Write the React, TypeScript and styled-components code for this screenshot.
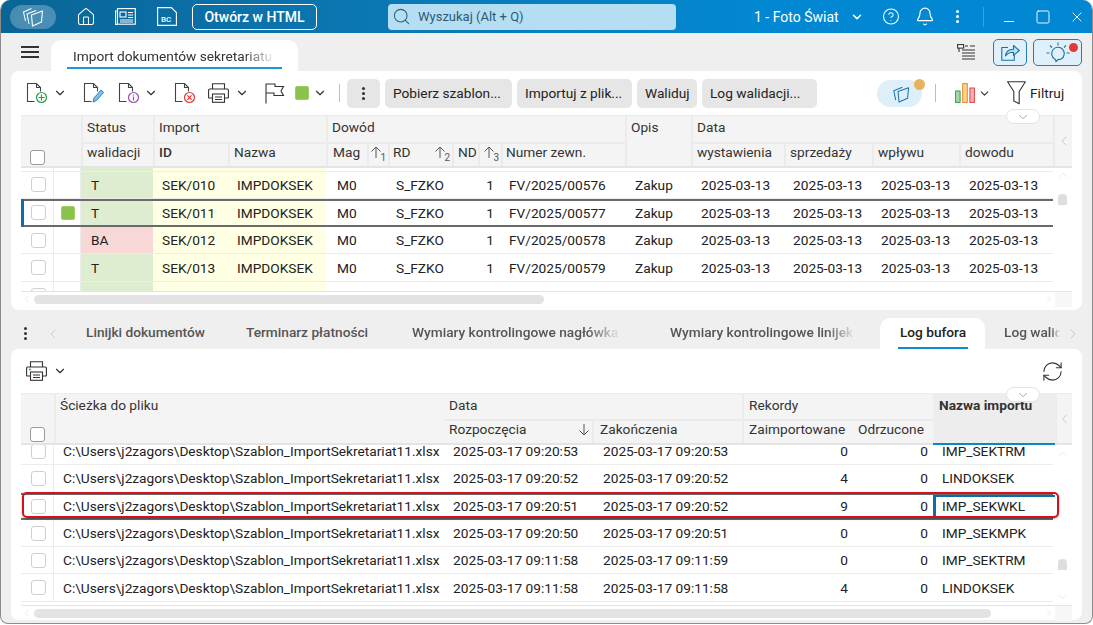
import React from "react";
import styled, { createGlobalStyle } from "styled-components";
import { Home, HelpCircle, Bell, Minus, Square, X, ChevronDown, ChevronLeft, ChevronRight, ChevronUp, RefreshCw, Search } from "lucide-react";

const Global = createGlobalStyle`
  html, body { margin: 0; padding: 0; background: #fff; }
  body { font-family: Roboto, "Liberation Sans", sans-serif; font-size: 13.7px; color: #222; overflow: hidden; }
  * { box-sizing: border-box; }
`;

const Win = styled.div`
  position: relative; width: 1093px; height: 624px; background: #efefef;
  border: 1px solid #8c8c8c; border-top: 0; border-radius: 10px 10px 8px 8px; overflow: hidden;
  display: flex; flex-direction: column;
`;
const TitleBar = styled.header`
  height: 33px; flex: none; display: flex; align-items: center; color: #fff;
  background: linear-gradient(90deg, #0a6597 0%, #0b78b4 35%, #0288d2 70%, #0288d2 100%);
`;
const LogoPill = styled.div`
  width: 46px; height: 24px; margin-left: 9px; border-radius: 12px; background: rgba(255,255,255,.26);
  display: flex; align-items: center; justify-content: center;
`;
const TitleIcon = styled.div<{ $w: number; $ml: number }>`
  width: ${p => p.$w}px; margin-left: ${p => p.$ml}px; flex: none; display: flex; align-items: center; justify-content: center;
`;
const HtmlBtn = styled.button`
  margin-left: 15px; width: 125px; height: 26px; border: 1px solid #fff; border-radius: 5px; background: transparent;
  color: #fff; font: 500 14px Roboto, sans-serif; padding: 0;
`;
const SearchBox = styled.div`
  margin-left: 71px; width: 288px; height: 26px; border-radius: 4px; background: #b5def3; color: #2c5a75;
  display: flex; align-items: center; gap: 7px; padding-left: 4px; font-size: 13px;
`;
const Company = styled.div` margin-left: 78px; width: 84px; font-size: 14px; white-space: nowrap; `;
const TitleSep = styled.div` width: 1px; height: 20px; background: rgba(255,255,255,.22); margin-left: 23px; `;

const TabRow = styled.div`
  height: 38px; flex: none; display: flex; align-items: flex-end; position: relative;
`;
const Burger = styled.div`
  width: 18px; height: 12px; margin: 0 0 13px 20px; border-top: 2px solid #333; border-bottom: 2px solid #333; position: relative;
  &::after { content: ""; position: absolute; left: 0; right: 0; top: 3px; height: 2px; background: #333; }
`;
const MainTab = styled.div`
  margin-left: 12px; width: 247px; height: 31px; background: #fff; border-radius: 10px 10px 0 0;
  padding: 0 16px; display: flex; flex-direction: column; align-items: stretch;
`;
const FadeText = styled.span`
  display: block; overflow: hidden; white-space: nowrap; font-weight: 500; color: #444;
  -webkit-mask-image: linear-gradient(90deg, #000 84%, transparent 100%);
  mask-image: linear-gradient(90deg, #000 84%, transparent 100%);
`;
const MainTabLabel = styled(FadeText)` margin: 7px 6px 0; height: 20px; line-height: 18px; color: #333; font-weight: 400; `;
const MainTabLine = styled.div` height: 2px; background: #1c9ad6; `;
const TabActions = styled.div` margin-left: auto; display: flex; align-items: center; gap: 6px; padding: 0 10px 5px 0; `;
const BlueBtn = styled.div<{ $w: number }>`
  position: relative; width: ${p => p.$w}px; height: 27px; border: 1px solid #1d7fb5; border-radius: 5px; background: #dff0fa;
  display: flex; align-items: center; justify-content: center; color: #1571a6;
`;
const RedDot = styled.span`
  position: absolute; right: 3px; top: 3px; width: 9px; height: 9px; border-radius: 50%; background: #e53935;
`;

const Panel = styled.section<{ $h: number }>`
  position: relative; margin: 0 10px; height: ${p => p.$h}px; flex: none; background: #fff; border-radius: 8px;
  display: flex; flex-direction: column; padding: 0 10px;
`;
const Toolbar = styled.div<{ $h: number }>`
  height: ${p => p.$h}px; flex: none; display: flex; align-items: center;
`;
const ToolIcon = styled.div<{ $ml: number }>`
  margin-left: ${p => p.$ml}px; display: flex; align-items: center; justify-content: center; flex: none; color: #333;
`;
const RefreshSlot = styled.div` margin-left: auto; margin-right: 8px; display: flex; color: #333; `;
const ListSlot = styled.div` margin-right: 11px; display: flex; `;
const Divider = styled.div<{ $ml: number }>`
  width: 1px; height: 18px; background: #bdbdbd; margin-left: ${p => p.$ml}px; flex: none;
`;
const GrayBtn = styled.button<{ $w: number; $ml?: number }>`
  width: ${p => p.$w}px; margin-left: ${p => p.$ml ?? 5}px; height: 29px; border: 0; border-radius: 5px; background: #e6e6e6;
  color: #222; font: 13.7px Roboto, sans-serif; padding: 0 0 0 8px; text-align: left; flex: none; white-space: nowrap; overflow: hidden;
`;
const Kebab = styled.div<{ $color?: string }>`
  display: flex; flex-direction: column; gap: 2px; align-items: center; justify-content: center;
  & i { width: 3px; height: 3px; border-radius: 50%; background: ${p => p.$color ?? "#333"}; display: block; }
`;
const KebabBtn = styled(GrayBtn)` padding: 0; display: flex; align-items: center; justify-content: center; `;
const SwatchBox = styled.span`
  width: 14px; height: 14px; border-radius: 2px; background: #8bc34a; border: 1px solid #9cce62; display: block; flex: none;
`;
const SyncPill = styled.div`
  position: relative; margin-left: 60px; width: 45px; height: 27px; border-radius: 14px; background: #deeff9;
  display: flex; align-items: center; justify-content: center; flex: none;
`;
const OrangeDot = styled.span`
  position: absolute; right: -3px; top: -1px; width: 11px; height: 11px; border-radius: 50%; background: #e6b45f;
`;
const FilterLabel = styled.span` margin-left: 4px; flex: none; `;

const Collapse = styled.div<{ $top: number }>`
  position: absolute; left: 995px; top: ${p => p.$top}px; width: 34px; height: 15px; border-radius: 8px; background: #fff;
  border: 1px solid #e2e2e2; display: flex; align-items: center; justify-content: center; color: #999; z-index: 3;
`;

const GridHead = styled.div<{ $cols: string; $rows: string }>`
  display: grid; grid-template-columns: ${p => p.$cols}; grid-template-rows: ${p => p.$rows};
  background: #f4f4f4; flex: none; border-bottom: 2px solid #e4e4e4; border-top: 1px solid #ececec;
`;
const HCell = styled.div<{ $col: string; $row: string; $active?: boolean; $noLine?: boolean; $sub?: boolean; $strong?: boolean; $pl?: number }>`
  grid-column: ${p => p.$col}; grid-row: ${p => p.$row}; padding: ${p => (p.$sub ? "0" : "3px")} 0 0 ${p => p.$pl ?? (p.$noLine ? 5 : 4)}px; line-height: 16px; white-space: nowrap; overflow: hidden;
  color: #333; position: relative; font-weight: ${p => (p.$strong ? 500 : 400)};
  border-left: ${p => (p.$noLine ? "0" : "2px solid #ebebeb")};
  border-top: ${p => (p.$sub ? "2px solid #ebebeb" : "0")};
  ${p => p.$active && "background:#ededed; font-weight:700; border-bottom:2px solid #0b86c8; margin-bottom:-2px; border-left:0; padding-left:6px;"}
`;
const HCheck = styled.div`
  grid-column: 1; grid-row: 1 / span 2; display: flex; align-items: flex-end; padding: 0 0 1px 9px; 
`;
const Check = styled.span<{ $strong?: boolean }>`
  display: block; width: 15px; height: 15px; border-radius: 3px; background: #fff; flex: none;
  border: 1px solid ${p => (p.$strong ? "#9a9a9a" : "#cfcfcf")};
`;
const SortMark = styled.span<{ $top?: number }>`
  position: absolute; right: 2px; top: ${p => p.$top ?? 1}px; display: flex; align-items: flex-end; color: #555;
  & em { font-style: normal; font-size: 10px; line-height: 10px; margin: 0 0 -4px -2px; }
`;
const SideCol = styled.div`
  grid-column: -2; grid-row: 1 / span 2; display: flex; align-items: center; justify-content: center; color: #bbb; border-left: 2px solid #ebebeb;
`;

const BodyWrap = styled.div<{ $h: number }>`
  height: ${p => p.$h}px; flex: none; display: grid; grid-template-columns: 1fr 19px; overflow: hidden; position: relative;
`;
const RowList = styled.div<{ $offset: number }>`
  margin-top: ${p => p.$offset}px; min-width: 0;
`;
const Row = styled.div<{ $cols: string; $h: number; $sel?: boolean }>`
  display: grid; grid-template-columns: ${p => p.$cols}; height: ${p => p.$h}px; position: relative;
  border-bottom: 1px solid #ececec; align-items: stretch;
  ${p => p.$sel && "border-top: 2px solid #6a6a6a; border-bottom: 2px solid #6a6a6a;"}
`;
const SelBar = styled.span`
  position: absolute; left: 0; top: -2px; bottom: -2px; width: 3px; background: #0b6ea8;
`;
const Cell = styled.div<{ $bg?: string; $pl?: number; $right?: number; $focus?: boolean; $span?: number }>`
  display: flex; align-items: center; white-space: nowrap; overflow: hidden; color: #222;
  background: ${p => p.$bg ?? "transparent"};
  padding-left: ${p => p.$pl ?? 0}px;
  ${p => p.$span && `grid-column: span ${p.$span};`}
  ${p => p.$right !== undefined && `justify-content:flex-end; padding-right:${p.$right}px;`}
  ${p => p.$focus && "box-shadow: inset 3px 0 0 #0b6ea8, inset 0 2px 0 #0b6ea8, inset 0 -2px 0 #0b6ea8;"}
`;
const CheckCell = styled(Cell)` padding-left: 10px; border-right: 1px solid #ececec; `;
const IndCell = styled(Cell)` padding-left: 7px; border-right: 1px solid #ececec; `;

const VScroll = styled.div`
  display: flex; flex-direction: column; align-items: center; color: #ddd; position: relative;
`;
const VThumb = styled.div<{ $mt: number }>`
  width: 9px; height: 11px; border-radius: 4px 4px 0 0; background: #dedede; margin-top: ${p => p.$mt}px; flex: none;
`;
const VArrowUp = styled.div<{ $mt: number }>` margin-top: ${p => p.$mt}px; line-height: 0; flex: none; `;
const VArrowDown = styled.div` margin-top: auto; margin-bottom: 1px; line-height: 0; flex: none; `;
const HScroll = styled.div`
  height: 15px; flex: none; display: flex; align-items: center; color: #ddd; border-top: 1px solid #e4e4e4; position: relative;
`;
const HThumb = styled.div<{ $w: number }>`
  width: ${p => p.$w}px; height: 9px; margin-left: 1px; border-radius: 5px; background: #e3e3e3;
`;
const HArrowRight = styled.div` margin-left: auto; margin-right: 17px; line-height: 0; `;
const HCorner = styled.div`
  position: absolute; right: 0; top: 0; width: 17px; height: 15px; background: #f7f7f7;
`;

const SubTabs = styled.div`
  height: 31px; margin-top: 8px; flex: none; display: flex; align-items: flex-end; position: relative; font-weight: 500; color: #555;
`;
const SubTabText = styled.div<{ $w: number; $ml: number }>`
  width: ${p => p.$w}px; margin-left: ${p => p.$ml}px; height: 31px; line-height: 29px; white-space: nowrap; overflow: hidden; flex: none;
`;
const SubTabFade = styled(FadeText)<{ $w: number; $ml: number }>`
  width: ${p => p.$w}px; margin-left: ${p => p.$ml}px; height: 31px; line-height: 29px; flex: none; color: #555;
`;
const ActiveSubTab = styled.div`
  width: 105px; height: 31px; margin-left: 24px; background: #fff; border-radius: 10px 10px 0 0; padding: 0 17px 0 18px; flex: none;
  display: flex; flex-direction: column; color: #222; text-align: center; line-height: 29px; white-space: nowrap;
`;
const ActiveLabel = styled.div` height: 29px; `;
const ActiveLine = styled.div` height: 2px; background: #0b8bd0; `;
const SubKebab = styled.div` margin: 0 0 9px 22px; width: 5px; flex: none; `;
const TabChevron = styled.div<{ $ml: number }>` margin: 0 0 7px ${p => p.$ml}px; line-height: 0; color: #bbb; flex: none; `;
const Annotation = styled.div`
  position: absolute; left: 21px; top: 492px; width: 1037px; height: 26px; border: 2px solid #d3101c; border-radius: 5px;
  box-shadow: 0 1px 2px rgba(0,0,0,.35); pointer-events: none; z-index: 4;
`;

/* ---------- drawings ---------- */
const Copies = ({ c = "#fff", s = 22, back = true }: { c?: string; s?: number; back?: boolean }) => (
  <svg width={s} height={s} viewBox="0 0 22 22" fill="none" stroke={c} strokeWidth="1.1" strokeLinejoin="round">
    {back && <path d="M3.500 15 1.500 6 9.500 2.500" />}
    <path d="M7 18 5 8 14 4.500" />
    <path d="M9.500 9 20.500 5l-1 11-9 4z" />
  </svg>
);
const News = () => (
  <svg width="21" height="17" viewBox="0 0 21 17" fill="none" stroke="#fff" strokeWidth="1.1">
    <rect x="2.500" y=".6" width="17.800" height="15.600" /><path d="M2.500 3H.6v13.400h2" /><rect x="5" y="4" width="6" height="5" />
    <path d="M13 4.500h5M13 7h5M13 9.500h5M5 12h13M5 14h13" />
  </svg>
);
const Doc = ({ children }: { children?: React.ReactNode }) => (
  <svg width="22" height="23" viewBox="0 0 22 23" fill="none">
    <path d="M8.500 19.500H1.500V1.500h9l4 4v4" stroke="#444" strokeWidth="1.1" />
    <path d="M10.500 1.500v4h4" stroke="#444" strokeWidth="1.1" />
    {children}
  </svg>
);
const DocAdd = () => (
  <Doc><circle cx="15.500" cy="15.500" r="5" fill="#fff" stroke="#22a04a" strokeWidth="1.2" /><path d="M15.500 12.500v6M12.500 15.500h6" stroke="#22a04a" strokeWidth="1.2" /></Doc>
);
const DocEdit = () => (
  <Doc><path d="M10 20l1-4 7-8 2.600 2.400-7 8z" fill="#7cc0ea" stroke="#2a85c4" strokeWidth="1" /></Doc>
);
const DocInfo = () => (
  <Doc><circle cx="15.500" cy="15.500" r="5" fill="#fff" stroke="#9c4fb0" strokeWidth="1.2" /><path d="M15.500 14.600v4M15.500 12.400v1" stroke="#9c4fb0" strokeWidth="1.2" /></Doc>
);
const DocDel = () => (
  <Doc><circle cx="15.500" cy="15.500" r="5" fill="#fff" stroke="#e53935" strokeWidth="1.2" /><path d="M13.400 13.400l4.200 4.200M17.600 13.400l-4.200 4.200" stroke="#e53935" strokeWidth="1.2" /></Doc>
);
const Printer = ({ mark = false }: { mark?: boolean }) => (
  <svg width="21" height="20" viewBox="0 0 21 20" fill="none" stroke="#333" strokeWidth="1.1">
    <path d="M4.500 6V.7h12V6" /><path d="M4.500 15H1.200a.6.6 0 0 1-.6-.6V7a1 1 0 0 1 1-1h17.800a1 1 0 0 1 1 1v7.400a.6.6 0 0 1-.6.6h-3.300" />
    <rect x="4.500" y="11" width="12" height="8.300" /><path d="M7 14h7M7 16.500h7" />
    {mark && <path d="M3 8.500h2" stroke="#2a9ad6" strokeWidth="1.4" />}
  </svg>
);
const Flag = () => (
  <svg width="20" height="21" viewBox="0 0 20 21" fill="none" stroke="#333" strokeWidth="1.1">
    <path d="M1 20.500V1h9v2.500h8.500L16 8l2.500 4.500H9V10H1" />
  </svg>
);
const Bars = () => (
  <svg width="20" height="20" viewBox="0 0 20 20">
    <rect x=".6" y="8" width="4.500" height="11.400" fill="#a8d8a8" stroke="#2f9e50" />
    <rect x="7.700" y=".6" width="4.600" height="18.800" fill="#fbd38b" stroke="#e8862e" />
    <rect x="14.900" y="5" width="4.500" height="14.400" fill="#f6b3b3" stroke="#e04444" />
  </svg>
);
const FunnelIcon = () => (
  <svg width="19" height="24" viewBox="0 0 19 24" fill="none" stroke="#333" strokeWidth="1.1" strokeLinejoin="round">
    <path d="M.6.8h17.800l-6.200 9.700v12.200l-5.400-2.800v-9.400z" />
  </svg>
);
const ShareIcon = () => (
  <svg width="19" height="17" viewBox="0 0 19 17" fill="none" stroke="#1571a6" strokeWidth="1.1" strokeLinejoin="round">
    <path d="M7 3.500H.8v12.800h12.500v-5" />
    <path d="M4.500 12c.4-4.200 3.500-6.800 8-6.800V1.500l5.800 5-5.800 5V8.300c-3.500 0-6 1-8 3.700z" fill="#bfe0f4" />
  </svg>
);
const ListIcon = () => (
  <svg width="19" height="18" viewBox="0 0 19 18" fill="none" stroke="#333" strokeWidth="1.1">
    <rect x=".6" y=".6" width="6" height="3.500" fill="#fff" /><path d="M8 2h3M13 2h5M5 6h13M5 9h13M5 12h13M5 15h13" />
    <path d="M2 4v4" />
  </svg>
);
const Bulb = () => (
  <svg width="24" height="22" viewBox="0 0 24 22" fill="none" stroke="#1571a6" strokeWidth="1.1">
    <path d="M12 17.500c-.4 1-1 1.500-2 2 0-1-.3-1.500-1-2.300A6.300 6.300 0 1 1 15.200 17c-1 .4-2 .5-3.200.5Z" />
    <path d="M12 .5v3M4 3.500l2 2M20 3.500l-2 2M.5 11h3M20.500 11h3" />
  </svg>
);
const BcDoc = () => (
  <svg width="20" height="19" viewBox="0 0 20 19" fill="none" stroke="#fff" strokeWidth="1.1">
    <path d="M.6.6h13.800l5 5v12.800H.6z" />
    <text x="4" y="15" fill="#fff" stroke="none" fontSize="8" fontFamily="Roboto" fontWeight="500">BC</text>
  </svg>
);
const Chev = ({ ml = 0, s = 14 }: { ml?: number; s?: number }) => (
  <ToolIcon $ml={ml}><ChevronDown size={s} strokeWidth={2} /></ToolIcon>
);
const Dots = ({ color }: { color?: string }) => <Kebab $color={color}><i /><i /><i /></Kebab>;

/* ---------- data ---------- */
const topCols = "33px 27px 72px 75px 98px 41px 21px 43px 21px 26px 23px 124px 66px 93px 88px 87px 94px";
const botCols = "33px 390px 148px 150px 110px 81px 122px";
const GREEN = "#deedcf", YELLOW = "#feffe3", RED = "#f8d7d7";

const topRows: { st: string; bg: string; id: string; no: string; sel?: boolean }[] = [
  { st: "", bg: GREEN, id: "", no: "" },
  { st: "T", bg: GREEN, id: "SEK/010", no: "00576" },
  { st: "T", bg: GREEN, id: "SEK/011", no: "00577", sel: true },
  { st: "BA", bg: RED, id: "SEK/012", no: "00578" },
  { st: "T", bg: GREEN, id: "SEK/013", no: "00579" },
  { st: "", bg: GREEN, id: "", no: "" },
];
const P = "C:\\Users\\j2zagors\\Desktop\\Szablon_ImportSekretariat11.xlsx";
const botRows = [
  { a: "2025-03-17 09:20:53", b: "2025-03-17 09:20:53", z: 0, o: 0, n: "IMP_SEKTRM" },
  { a: "2025-03-17 09:20:52", b: "2025-03-17 09:20:52", z: 4, o: 0, n: "LINDOKSEK" },
  { a: "2025-03-17 09:20:51", b: "2025-03-17 09:20:52", z: 9, o: 0, n: "IMP_SEKWKL", sel: true },
  { a: "2025-03-17 09:20:50", b: "2025-03-17 09:20:51", z: 0, o: 0, n: "IMP_SEKMPK" },
  { a: "2025-03-17 09:11:58", b: "2025-03-17 09:11:59", z: 0, o: 0, n: "IMP_SEKTRM" },
  { a: "2025-03-17 09:11:58", b: "2025-03-17 09:11:58", z: 4, o: 0, n: "LINDOKSEK" },
];
const D = "2025-03-13";

const Sort = ({ n }: { n: number }) => (
  <SortMark>
    <svg width="12" height="14" viewBox="0 0 12 14" fill="none" stroke="#555" strokeWidth="1"><path d="M6 13V2M1.500 6.500 6 2l4.500 4.500" /></svg>
    <em>{n}</em>
  </SortMark>
);

export default function App() {
  return (
    <Win>
      <Global />
      <TitleBar>
        <LogoPill><Copies /></LogoPill>
        <TitleIcon $w={20} $ml={20}><Home size={20} strokeWidth={1.3} /></TitleIcon>
        <TitleIcon $w={21} $ml={19}><News /></TitleIcon>
        <TitleIcon $w={20} $ml={21}><BcDoc /></TitleIcon>
        <HtmlBtn>Otwórz w HTML</HtmlBtn>
        <SearchBox><Search size={19} strokeWidth={1.3} color="#22607f" />Wyszukaj (Alt + Q)</SearchBox>
        <Company>1 - Foto Świat</Company>
        <TitleIcon $w={14} $ml={12}><ChevronDown size={14} strokeWidth={2.6} /></TitleIcon>
        <TitleIcon $w={18} $ml={18}><HelpCircle size={19} strokeWidth={1.4} /></TitleIcon>
        <TitleIcon $w={20} $ml={15}><Bell size={21} strokeWidth={1.4} /></TitleIcon>
        <TitleIcon $w={5} $ml={20}><Dots color="#fff" /></TitleIcon>
        <TitleSep />
        <TitleIcon $w={16} $ml={17}><Minus size={17} strokeWidth={1.4} style={{ transform: "translateY(5px)" }} /></TitleIcon>
        <TitleIcon $w={16} $ml={18}><Square size={16} strokeWidth={1.4} /></TitleIcon>
        <TitleIcon $w={16} $ml={18}><X size={18} strokeWidth={1.4} /></TitleIcon>
      </TitleBar>

      <TabRow>
        <Burger />
        <MainTab>
          <MainTabLabel>Import dokumentów sekretariatu</MainTabLabel>
          <MainTabLine />
        </MainTab>
        <TabActions>
          <ListSlot><ListIcon /></ListSlot>
          <BlueBtn $w={34}><ShareIcon /></BlueBtn>
          <BlueBtn $w={49}><Bulb /><RedDot /></BlueBtn>
        </TabActions>
      </TabRow>

      <Panel $h={239}>
        <Toolbar $h={44}>
          <ToolIcon $ml={5}><DocAdd /></ToolIcon>
          <Chev ml={5} />
          <ToolIcon $ml={16}><DocEdit /></ToolIcon>
          <ToolIcon $ml={13}><DocInfo /></ToolIcon>
          <Chev ml={4} />
          <ToolIcon $ml={16}><DocDel /></ToolIcon>
          <ToolIcon $ml={12}><Printer /></ToolIcon>
          <Chev ml={6} />
          <ToolIcon $ml={16}><Flag /></ToolIcon>
          <ToolIcon $ml={10}><SwatchBox /></ToolIcon>
          <Chev ml={4} />
          <Divider $ml={12} />
          <KebabBtn $w={33} $ml={7}><Dots /></KebabBtn>
          <GrayBtn $w={127}>Pobierz szablon...</GrayBtn>
          <GrayBtn $w={115}>Importuj z plik...</GrayBtn>
          <GrayBtn $w={60}>Waliduj</GrayBtn>
          <GrayBtn $w={115}>Log walidacji...</GrayBtn>
          <SyncPill><Copies c="#1878b0" s={21} back={false} /><OrangeDot /></SyncPill>
          <Divider $ml={13} />
          <ToolIcon $ml={19}><Bars /></ToolIcon>
          <Chev ml={3} s={13} />
          <ToolIcon $ml={16}><FunnelIcon /></ToolIcon>
          <FilterLabel>Filtruj</FilterLabel>
        </Toolbar>
        <Collapse $top={38}><ChevronDown size={14} strokeWidth={1.5} /></Collapse>

        <GridHead $cols={topCols + " 19px"} $rows="26px 24px">
          <HCheck><Check $strong /></HCheck>
          <HCell $col="3" $row="1">Status</HCell>
          <HCell $col="3" $row="2" $sub>walidacji</HCell>
          <HCell $col="4 / span 2" $row="1">Import</HCell>
          <HCell $col="4" $row="2" $sub $strong>ID</HCell>
          <HCell $col="5" $row="2" $sub>Nazwa</HCell>
          <HCell $col="6 / span 7" $row="1">Dowód</HCell>
          <HCell $col="6" $row="2" $sub $pl={5}>Mag</HCell>
          <HCell $col="7" $row="2" $sub><Sort n={1} /></HCell>
          <HCell $col="8" $row="2" $sub $pl={3}>RD</HCell>
          <HCell $col="9" $row="2" $sub $noLine><Sort n={2} /></HCell>
          <HCell $col="10" $row="2" $sub>ND</HCell>
          <HCell $col="11" $row="2" $sub><Sort n={3} /></HCell>
          <HCell $col="12" $row="2" $sub $pl={3}>Numer zewn.</HCell>
          <HCell $col="13" $row="1 / span 2">Opis</HCell>
          <HCell $col="14 / span 4" $row="1">Data</HCell>
          <HCell $col="14" $row="2" $sub>wystawienia</HCell>
          <HCell $col="15" $row="2" $sub>sprzedaży</HCell>
          <HCell $col="16" $row="2" $sub>wpływu</HCell>
          <HCell $col="17" $row="2" $sub>dowodu</HCell>
          <SideCol><ChevronLeft size={16} strokeWidth={1.2} /></SideCol>
        </GridHead>

        <BodyWrap $h={123}>
          <RowList $offset={-24}>
            {topRows.map((r, i) => (
              <Row key={i} $cols={topCols} $h={27.6} $sel={r.sel}>
                {r.sel && <SelBar />}
                <CheckCell><Check /></CheckCell>
                <IndCell>{r.sel && <SwatchBox />}</IndCell>
                <Cell $bg={r.bg} $pl={10}>{r.st}</Cell>
                <Cell $bg={YELLOW} $pl={9}>{r.id}</Cell>
                <Cell $bg={YELLOW} $pl={9}>{r.id && "IMPDOKSEK"}</Cell>
                <Cell $pl={11}>{r.id && "M0"}</Cell>
                <Cell />
                <Cell $pl={8} $span={2}>{r.id && "S_FZKO"}</Cell>
                <Cell />
                <Cell $right={7}>{r.id && "1"}</Cell>
                <Cell $pl={8}>{r.id && `FV/2025/${r.no}`}</Cell>
                <Cell $pl={10}>{r.id && "Zakup"}</Cell>
                <Cell $pl={10}>{r.id && D}</Cell>
                <Cell $pl={9}>{r.id && D}</Cell>
                <Cell $pl={9}>{r.id && D}</Cell>
                <Cell $pl={10}>{r.id && D}</Cell>
              </Row>
            ))}
          </RowList>
          <VScroll>
            <VArrowUp $mt={0}><ChevronUp size={14} strokeWidth={1.2} /></VArrowUp>
            <VThumb $mt={12} />
            <VArrowDown><ChevronDown size={14} strokeWidth={1.2} /></VArrowDown>
          </VScroll>
        </BodyWrap>
        <HScroll>
          <ChevronLeft size={12} strokeWidth={1.2} />
          <HThumb $w={510} />
          <HArrowRight><ChevronRight size={12} strokeWidth={1.2} /></HArrowRight>
          <HCorner />
        </HScroll>
      </Panel>

      <SubTabs>
        <SubKebab><Dots /></SubKebab>
        <TabChevron $ml={17}><ChevronLeft size={16} strokeWidth={1} /></TabChevron>
        <SubTabText $w={122} $ml={25}>Linijki dokumentów</SubTabText>
        <SubTabText $w={125} $ml={38}>Terminarz płatności</SubTabText>
        <SubTabFade $w={209} $ml={41}>Wymiary kontrolingowe nagłówka</SubTabFade>
        <SubTabFade $w={186} $ml={49}>Wymiary kontrolingowe linijek</SubTabFade>
        <ActiveSubTab>
          <ActiveLabel>Log bufora</ActiveLabel>
          <ActiveLine />
        </ActiveSubTab>
        <SubTabFade $w={56} $ml={19}>Log walidacji</SubTabFade>
        <TabChevron $ml={5}><ChevronRight size={16} strokeWidth={1.1} /></TabChevron>
      </SubTabs>

      <Panel $h={271}>
        <Toolbar $h={44}>
          <ToolIcon $ml={5}><Printer mark /></ToolIcon>
          <Chev ml={6} />
          <RefreshSlot><RefreshCw size={23} strokeWidth={1.1} /></RefreshSlot>
        </Toolbar>
        <Collapse $top={38}><ChevronDown size={14} strokeWidth={1.5} /></Collapse>

        <GridHead $cols={botCols + " 17px"} $rows="25px 24px">
          <HCheck><Check $strong /></HCheck>
          <HCell $col="2" $row="1 / span 2">Ścieżka do pliku</HCell>
          <HCell $col="3 / span 2" $row="1" $noLine>Data</HCell>
          <HCell $col="3" $row="2" $sub $noLine>Rozpoczęcia
            <SortMark $top={2}><svg width="12" height="13" viewBox="0 0 12 13" fill="none" stroke="#555" strokeWidth="1"><path d="M6 1v11M1.500 7.500 6 12l4.500-4.500" /></svg></SortMark>
          </HCell>
          <HCell $col="4" $row="2" $sub $pl={6}>Zakończenia</HCell>
          <HCell $col="5 / span 2" $row="1" $pl={5}>Rekordy</HCell>
          <HCell $col="5" $row="2" $sub $pl={5}>Zaimportowane</HCell>
          <HCell $col="6" $row="2" $sub $noLine $pl={6}>Odrzucone</HCell>
          <HCell $col="7" $row="1 / span 2" $active>Nazwa importu</HCell>
          <SideCol><ChevronLeft size={16} strokeWidth={1.2} /></SideCol>
        </GridHead>

        <BodyWrap $h={160}>
          <RowList $offset={-7}>
            {botRows.map((r, i) => (
              <Row key={i} $cols={botCols} $h={27.3} $sel={r.sel}>
                <CheckCell><Check /></CheckCell>
                <Cell $pl={9}>{P}</Cell>
                <Cell $pl={9}>{r.a}</Cell>
                <Cell $pl={11}>{r.b}</Cell>
                <Cell $right={4}>{r.z}</Cell>
                <Cell $right={5}>{r.o}</Cell>
                <Cell $pl={9} $focus={r.sel}>{r.n}</Cell>
              </Row>
            ))}
          </RowList>
          <VScroll>
            <VArrowUp $mt={2}><ChevronUp size={14} strokeWidth={1.2} /></VArrowUp>
            <VThumb $mt={98} />
            <VArrowDown><ChevronDown size={14} strokeWidth={1.2} /></VArrowDown>
          </VScroll>
        </BodyWrap>
        <HScroll>
          <ChevronLeft size={12} strokeWidth={1.2} />
          <HThumb $w={957} />
          <HArrowRight><ChevronRight size={12} strokeWidth={1.2} /></HArrowRight>
          <HCorner />
        </HScroll>
      </Panel>
      <Annotation />
    </Win>
  );
}
